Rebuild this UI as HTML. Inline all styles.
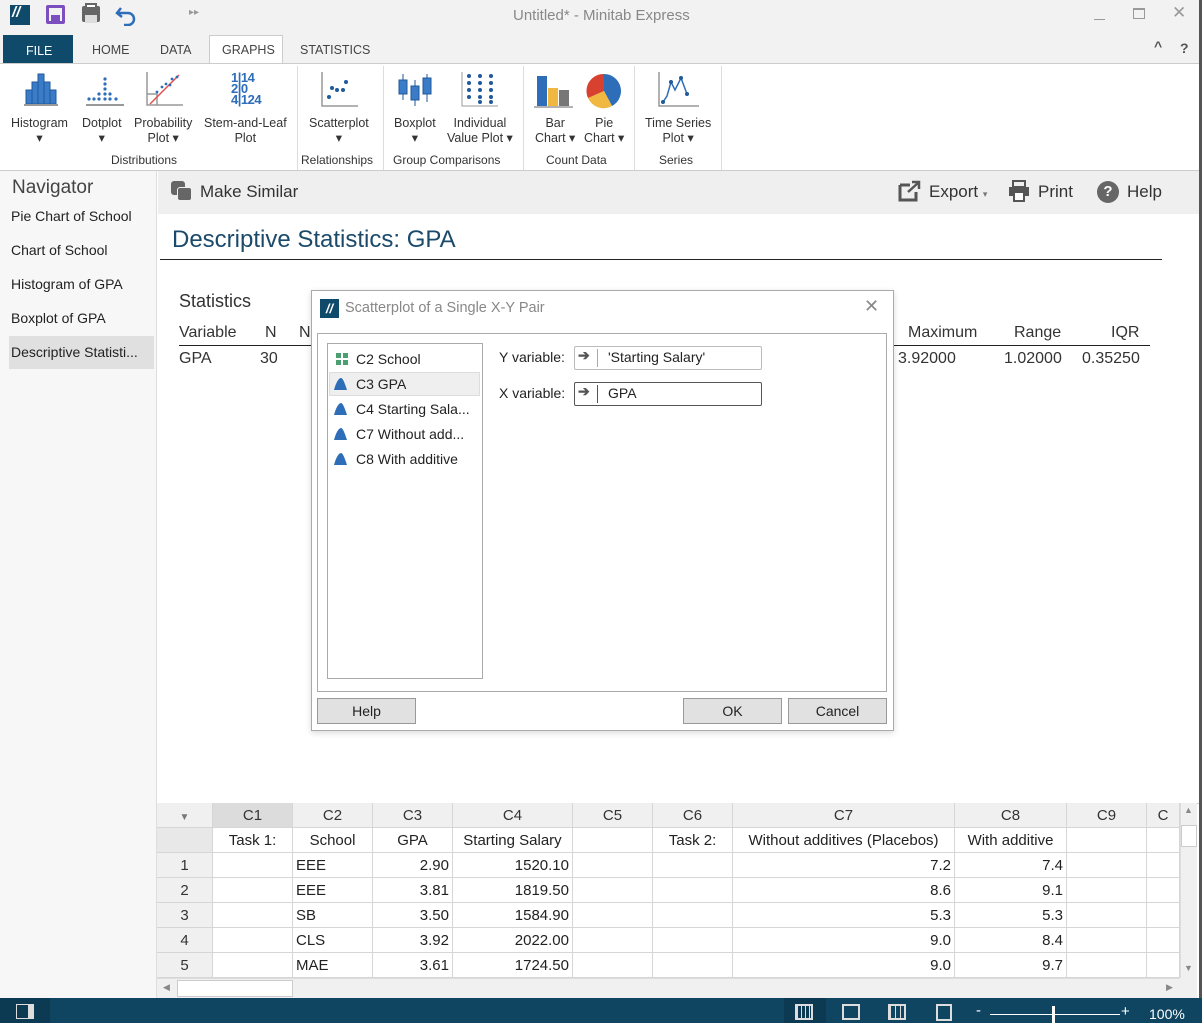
<!DOCTYPE html>
<html><head><meta charset="utf-8"><style>
*{box-sizing:border-box;margin:0;padding:0}
body{width:1202px;height:1023px;position:relative;overflow:hidden;background:#fff;font-family:"Liberation Sans",sans-serif;color:#222}
.a{position:absolute}
.t{position:absolute;white-space:nowrap}
.lbl{font-size:12.5px;color:#333;text-align:center;line-height:15px}
.grp{font-size:12px;color:#333}
.sep{position:absolute;top:66px;width:1px;height:104px;background:#ddd}
.nav{font-size:14px;color:#222;left:11px}
.cell{position:absolute;height:25px;line-height:25px;font-size:15px;border-right:1px solid #d6d6d6;border-bottom:1px solid #d6d6d6;padding:0 3px;white-space:nowrap;overflow:hidden}
.hd{background:#f0f0f0;text-align:center;color:#333}
.btn{position:absolute;top:698px;height:26px;border:1px solid #999;background:#e1e1e1;font-size:14px;text-align:center;line-height:24px}
.li{position:absolute;left:329px;width:150px;height:24px;font-size:14px;line-height:24px;padding-left:27px}
.tri{position:absolute;left:5px;top:6px;width:13px;height:12px;background:#2e6db8;clip-path:path('M0 12 C2 4 5 0 7 0 C9 0 11 6 13 12 Z')}
</style></head><body>
<!-- title bar -->
<div class="a" style="left:0;top:0;width:1202px;height:63px;background:#f2f2f2"></div>
<div class="a" style="left:10px;top:5px;width:20px;height:20px;background:#0f4a6a"></div>
<div class="t" style="left:12px;top:4px;color:#fff;font-weight:bold;font-size:15px;font-style:italic">//</div>
<div class="a" style="left:46px;top:5px;width:19px;height:19px;border:3px solid #7b4fc0;border-radius:2px"></div>
<div class="a" style="left:51px;top:15px;width:9px;height:6px;background:#7b4fc0"></div>
<div class="a" style="left:82px;top:6px;width:18px;height:16px;background:#666;border-radius:2px"></div>
<div class="a" style="left:85px;top:3px;width:12px;height:6px;border:2px solid #666;background:#fff"></div>
<div class="a" style="left:85px;top:15px;width:12px;height:8px;background:#ddd"></div>
<svg class="a" style="left:114px;top:4px" width="24" height="22"><path d="M7 4 L3 9 L8 13 M3 9 H14 A6 6 0 0 1 14 21 H10" fill="none" stroke="#2e6db8" stroke-width="2.5"/></svg>
<div class="t" style="left:189px;top:7px;font-size:10px;color:#999">▸▸</div>
<div class="t" style="left:513px;top:7px;font-size:15px;color:#888">Untitled* - Minitab Express</div>
<div class="a" style="left:1094px;top:19px;width:11px;height:1px;background:#999"></div>
<div class="a" style="left:1133px;top:8px;width:12px;height:11px;border:1px solid #999;border-top-width:2px"></div>
<div class="t" style="left:1172px;top:3px;font-size:17px;color:#999">✕</div>
<!-- tabs -->
<div class="a" style="left:3px;top:35px;width:70px;height:28px;background:#0f4a6a"></div>
<div class="t" style="left:26px;top:44px;font-size:12.5px;color:#fff">FILE</div>
<div class="t" style="left:92px;top:43px;font-size:12.5px;color:#444">HOME</div>
<div class="t" style="left:160px;top:43px;font-size:12.5px;color:#444">DATA</div>
<div class="a" style="left:209px;top:35px;width:74px;height:30px;background:#fff;border:1px solid #ccc;border-bottom:none"></div>
<div class="t" style="left:222px;top:43px;font-size:12.5px;color:#444">GRAPHS</div>
<div class="t" style="left:300px;top:43px;font-size:12.5px;color:#444">STATISTICS</div>
<div class="t" style="left:1154px;top:38px;font-size:14px;color:#555;font-weight:bold">^</div>
<div class="t" style="left:1180px;top:40px;font-size:14px;color:#555;font-weight:bold">?</div>
<div class="a" style="left:0;top:63px;width:1202px;height:1px;background:#ccc"></div>
<!-- ribbon -->
<div class="a" style="left:0;top:64px;width:1202px;height:107px;background:#fff;border-bottom:1px solid #ccc"></div>
<svg class="a" style="left:22px;top:72px" width="40" height="36"><g fill="#3a7cc8" stroke="#1f5a9a"><rect x="4" y="18" width="6" height="14"/><rect x="10" y="10" width="6" height="22"/><rect x="16" y="2" width="6" height="30"/><rect x="22" y="10" width="6" height="22"/><rect x="28" y="18" width="6" height="14"/></g><line x1="2" y1="33" x2="36" y2="33" stroke="#999" stroke-width="2"/></svg>
<svg class="a" style="left:84px;top:72px" width="42" height="36"><g fill="#2e6db8"><circle cx="5" cy="27" r="1.6"/><circle cx="10" cy="27" r="1.6"/><circle cx="15" cy="27" r="1.6"/><circle cx="15" cy="22" r="1.6"/><circle cx="21" cy="27" r="1.6"/><circle cx="21" cy="22" r="1.6"/><circle cx="21" cy="17" r="1.6"/><circle cx="21" cy="12" r="1.6"/><circle cx="21" cy="7" r="1.6"/><circle cx="26" cy="27" r="1.6"/><circle cx="26" cy="22" r="1.6"/><circle cx="32" cy="27" r="1.6"/></g><line x1="2" y1="33" x2="40" y2="33" stroke="#999" stroke-width="2"/></svg>
<svg class="a" style="left:145px;top:72px" width="40" height="36"><path d="M2 0 V33 H38 M2 22 H12 V33" fill="none" stroke="#999" stroke-width="1.5"/><line x1="5" y1="32" x2="34" y2="3" stroke="#e05050" stroke-width="1.5"/><g fill="#2e6db8"><circle cx="12" cy="20" r="1.4"/><circle cx="17" cy="15" r="1.4"/><circle cx="21" cy="12" r="1.4"/><circle cx="25" cy="13" r="1.4"/><circle cx="27" cy="7" r="1.4"/><circle cx="32" cy="5" r="1.4"/></g></svg>
<div class="t" style="left:231px;top:72px;font-size:13px;line-height:11px;color:#2e6db8;font-weight:bold;letter-spacing:-0.5px">1|14<br>2|0<br>4|124</div>
<svg class="a" style="left:320px;top:72px" width="40" height="38"><path d="M2 0 V34 H38" fill="none" stroke="#999" stroke-width="1.5"/><g fill="#1f5a9a"><circle cx="9" cy="25" r="2"/><circle cx="12" cy="16" r="2"/><circle cx="17" cy="18" r="2"/><circle cx="23" cy="18" r="2"/><circle cx="26" cy="10" r="2"/></g></svg>
<svg class="a" style="left:396px;top:72px" width="40" height="36"><g stroke="#1f5a9a" fill="#3a7cc8"><line x1="7" y1="2" x2="7" y2="28"/><rect x="3" y="8" width="8" height="14"/><line x1="19" y1="8" x2="19" y2="34"/><rect x="15" y="14" width="8" height="14"/><line x1="31" y1="2" x2="31" y2="30"/><rect x="27" y="6" width="8" height="16"/></g></svg>
<svg class="a" style="left:460px;top:72px" width="40" height="36"><path d="M2 0 V34 H38" fill="none" stroke="#999"/><g fill="#1f5a9a"><circle cx="9" cy="4" r="2"/><circle cx="9" cy="11" r="2"/><circle cx="9" cy="18" r="2"/><circle cx="9" cy="25" r="2"/><circle cx="20" cy="4" r="2"/><circle cx="20" cy="11" r="2"/><circle cx="20" cy="18" r="2"/><circle cx="20" cy="25" r="2"/><circle cx="20" cy="30" r="2"/><circle cx="31" cy="4" r="2"/><circle cx="31" cy="11" r="2"/><circle cx="31" cy="18" r="2"/><circle cx="31" cy="25" r="2"/><circle cx="31" cy="30" r="2"/></g></svg>
<svg class="a" style="left:533px;top:72px" width="42" height="38"><rect x="4" y="4" width="10" height="30" fill="#2e6db8"/><rect x="15" y="16" width="10" height="18" fill="#f0b840"/><rect x="26" y="18" width="10" height="16" fill="#777"/><line x1="1" y1="35" x2="40" y2="35" stroke="#999" stroke-width="1.5"/></svg>
<svg class="a" style="left:584px;top:72px" width="40" height="38"><path d="M20 19 L20 2 A17 17 0 0 1 28 34 Z" fill="#2e6db8"/><path d="M20 19 L28 34 A17 17 0 0 1 4 26 Z" fill="#f0b840"/><path d="M20 19 L4 26 A17 17 0 0 1 20 2 Z" fill="#d84030"/></svg>
<svg class="a" style="left:657px;top:70px" width="44" height="40"><path d="M2 2 V36 H42" fill="none" stroke="#999" stroke-width="1.5"/><polyline points="6,32 10,26 14,12 18,20 24,8 30,24" fill="none" stroke="#2e6db8" stroke-width="1.5"/><g fill="#1f5a9a"><circle cx="6" cy="32" r="2"/><circle cx="14" cy="12" r="2"/><circle cx="24" cy="8" r="2"/><circle cx="30" cy="24" r="2"/></g></svg>
<div class="t lbl" style="left:11px;top:116px">Histogram<br>▾</div>
<div class="t lbl" style="left:82px;top:116px">Dotplot<br>▾</div>
<div class="t lbl" style="left:134px;top:116px">Probability<br>Plot ▾</div>
<div class="t lbl" style="left:204px;top:116px">Stem-and-Leaf<br>Plot</div>
<div class="t lbl" style="left:309px;top:116px">Scatterplot<br>▾</div>
<div class="t lbl" style="left:394px;top:116px">Boxplot<br>▾</div>
<div class="t lbl" style="left:447px;top:116px">Individual<br>Value Plot ▾</div>
<div class="t lbl" style="left:535px;top:116px">Bar<br>Chart ▾</div>
<div class="t lbl" style="left:584px;top:116px">Pie<br>Chart ▾</div>
<div class="t lbl" style="left:645px;top:116px">Time Series<br>Plot ▾</div>
<div class="t grp" style="left:111px;top:153px">Distributions</div>
<div class="t grp" style="left:301px;top:153px">Relationships</div>
<div class="t grp" style="left:393px;top:153px">Group Comparisons</div>
<div class="t grp" style="left:546px;top:153px">Count Data</div>
<div class="t grp" style="left:659px;top:153px">Series</div>
<div class="sep" style="left:297px"></div><div class="sep" style="left:383px"></div><div class="sep" style="left:523px"></div><div class="sep" style="left:634px"></div><div class="sep" style="left:721px"></div>
<!-- navigator -->
<div class="a" style="left:0;top:171px;width:157px;height:827px;background:#f7f7f7;border-right:1px solid #ddd"></div>
<div class="t" style="left:12px;top:177px;font-size:19px;color:#444">Navigator</div>
<div class="t nav" style="top:208px">Pie Chart of School</div>
<div class="t nav" style="top:242px">Chart of School</div>
<div class="t nav" style="top:276px">Histogram of GPA</div>
<div class="t nav" style="top:310px">Boxplot of GPA</div>
<div class="a" style="left:9px;top:336px;width:145px;height:33px;background:#e0e0e0"></div>
<div class="t nav" style="top:344px">Descriptive Statisti...</div>
<!-- output -->
<div class="a" style="left:158px;top:171px;width:1042px;height:43px;background:#efefef"></div>
<div class="a" style="left:171px;top:181px;width:14px;height:14px;background:#666;border-radius:3px"></div>
<div class="a" style="left:177px;top:187px;width:15px;height:14px;background:#666;border-radius:3px;border:1px solid #efefef"></div>
<div class="t" style="left:200px;top:182px;font-size:17px;color:#333">Make Similar</div>
<svg class="a" style="left:898px;top:180px" width="24" height="22"><path d="M2 5 H12 M2 5 V20 H18 V12" fill="none" stroke="#555" stroke-width="3"/><path d="M10 12 L20 3 M14 2 H21 V9" fill="none" stroke="#555" stroke-width="2.5"/></svg>
<div class="t" style="left:929px;top:182px;font-size:17px;color:#333">Export <span style="font-size:9px;color:#777">▾</span></div>
<svg class="a" style="left:1008px;top:180px" width="22" height="22"><rect x="5" y="1" width="12" height="6" fill="none" stroke="#555" stroke-width="2"/><rect x="1" y="7" width="20" height="9" fill="#555"/><rect x="6" y="12" width="10" height="9" fill="#fff" stroke="#555" stroke-width="2"/></svg>
<div class="t" style="left:1038px;top:182px;font-size:17px;color:#333">Print</div>
<div class="a" style="left:1097px;top:181px;width:22px;height:22px;border-radius:50%;background:#666;color:#fff;font-weight:bold;font-size:15px;text-align:center;line-height:22px">?</div>
<div class="t" style="left:1127px;top:182px;font-size:17px;color:#333">Help</div>
<div class="t" style="left:172px;top:226px;font-size:24px;color:#1b4a6b">Descriptive Statistics: GPA</div>
<div class="a" style="left:160px;top:259px;width:1002px;height:1px;background:#222"></div>
<div class="t" style="left:179px;top:291px;font-size:18px;color:#333">Statistics</div>
<div class="t" style="left:179px;top:324px;font-size:16px;color:#333">Variable</div>
<div class="t" style="left:265px;top:324px;font-size:16px;color:#333">N</div>
<div class="t" style="left:299px;top:324px;font-size:16px;color:#333">N</div>
<div class="t" style="left:908px;top:324px;font-size:16px;color:#333">Maximum</div>
<div class="t" style="left:1014px;top:324px;font-size:16px;color:#333">Range</div>
<div class="t" style="left:1111px;top:324px;font-size:16px;color:#333">IQR</div>
<div class="a" style="left:179px;top:345px;width:971px;height:1px;background:#222"></div>
<div class="t" style="left:179px;top:350px;font-size:16px;color:#333">GPA</div>
<div class="t" style="left:260px;top:350px;font-size:16px;color:#333">30</div>
<div class="t" style="left:898px;top:350px;font-size:16px;color:#333">3.92000</div>
<div class="t" style="left:1004px;top:350px;font-size:16px;color:#333">1.02000</div>
<div class="t" style="left:1082px;top:350px;font-size:16px;color:#333">0.35250</div>
<!-- dialog -->
<div class="a" style="left:311px;top:290px;width:583px;height:441px;background:#fff;border:1px solid #aaa;box-shadow:0 2px 6px rgba(0,0,0,.15)"></div>
<div class="a" style="left:320px;top:299px;width:19px;height:19px;background:#0f4a6a;color:#fff;font-weight:bold;font-style:italic;font-size:13px;text-align:center;line-height:19px">//</div>
<div class="t" style="left:345px;top:300px;font-size:14.5px;color:#888">Scatterplot of a Single X-Y Pair</div>
<div class="t" style="left:864px;top:296px;font-size:18px;color:#888">✕</div>
<div class="a" style="left:317px;top:333px;width:570px;height:359px;border:1px solid #aaa"></div>
<div class="a" style="left:327px;top:343px;width:156px;height:336px;border:1px solid #aaa"></div>
<div class="a" style="left:329px;top:372px;width:151px;height:24px;background:#efefef;border:1px solid #ddd"></div>
<div class="li" style="top:347px"><div class="a" style="left:7px;top:6px;width:12px;height:12px;background:linear-gradient(#fff,#fff) 5px 0/2px 12px no-repeat,linear-gradient(#fff,#fff) 0 5px/12px 2px no-repeat,#4aa070"></div>C2 School</div>
<div class="li" style="top:372px"><div class="tri"></div>C3 GPA</div>
<div class="li" style="top:397px"><div class="tri"></div>C4 Starting Sala...</div>
<div class="li" style="top:422px"><div class="tri"></div>C7 Without add...</div>
<div class="li" style="top:447px"><div class="tri"></div>C8 With additive</div>
<div class="t" style="left:499px;top:349px;font-size:14px">Y variable:</div>
<div class="t" style="left:499px;top:385px;font-size:14px">X variable:</div>
<div class="a" style="left:574px;top:346px;width:188px;height:24px;border:1px solid #bbb;border-radius:2px"></div>
<div class="a" style="left:574px;top:382px;width:188px;height:24px;border:1px solid #555;border-radius:2px"></div>
<div class="a" style="left:597px;top:349px;width:1px;height:18px;background:#aaa"></div>
<div class="a" style="left:597px;top:385px;width:1px;height:18px;background:#555"></div>
<div class="t" style="left:578px;top:347px;font-size:14px;color:#555;font-weight:bold">➔</div>
<div class="t" style="left:578px;top:383px;font-size:14px;color:#555;font-weight:bold">➔</div>
<div class="t" style="left:608px;top:349px;font-size:14px">'Starting Salary'</div>
<div class="t" style="left:608px;top:385px;font-size:14px">GPA</div>
<div class="btn" style="left:317px;width:99px">Help</div>
<div class="btn" style="left:683px;width:99px">OK</div>
<div class="btn" style="left:788px;width:99px">Cancel</div>
<!-- worksheet -->
<div class="a" style="left:157px;top:803px;width:1043px;height:195px;background:#fff;border-top:1px solid #ccc"></div>
<div id="ws"></div>
<div class="a" style="left:1180px;top:803px;width:17px;height:175px;background:#f0f0f0;border-left:1px solid #ddd"></div>
<div class="t" style="left:1184px;top:805px;font-size:9px;color:#888">▲</div>
<div class="a" style="left:1181px;top:825px;width:16px;height:22px;background:#fff;border:1px solid #ccc"></div>
<div class="t" style="left:1184px;top:963px;font-size:9px;color:#888">▼</div>
<div class="a" style="left:157px;top:978px;width:1023px;height:20px;background:#f0f0f0;border-top:1px solid #ddd"></div>
<div class="t" style="left:163px;top:982px;font-size:9px;color:#888">◀</div>
<div class="a" style="left:177px;top:980px;width:116px;height:17px;background:#fff;border:1px solid #ccc"></div>
<div class="a" style="left:1180px;top:978px;width:17px;height:20px;background:#f0f0f0"></div>
<div class="t" style="left:1166px;top:982px;font-size:9px;color:#888">▶</div>
<!-- status bar -->
<div class="a" style="left:0;top:998px;width:1202px;height:25px;background:#0f4561"></div>
<div class="a" style="left:0;top:998px;width:50px;height:25px;background:#0c3a52"></div>
<div class="a" style="left:16px;top:1004px;width:18px;height:15px;border:1px solid #ddd;border-right-width:6px"></div>
<div class="a" style="left:784px;top:998px;width:42px;height:25px;background:#0c3a52"></div>
<div class="a" style="left:795px;top:1004px;width:18px;height:16px;border:2px solid #ddd;background:repeating-linear-gradient(90deg,#ddd 0 1px,transparent 1px 4px)"></div>
<div class="a" style="left:842px;top:1004px;width:18px;height:16px;border:2px solid #ddd"></div>
<div class="a" style="left:888px;top:1004px;width:18px;height:16px;border:2px solid #ddd;background:repeating-linear-gradient(90deg,#ddd 0 1px,transparent 1px 5px)"></div>
<div class="a" style="left:936px;top:1004px;width:16px;height:17px;border:2px solid #ddd"></div>
<div class="t" style="left:976px;top:1002px;font-size:15px;color:#fff">-</div>
<div class="a" style="left:990px;top:1014px;width:130px;height:1px;background:#fff"></div>
<div class="a" style="left:1052px;top:1006px;width:3px;height:17px;background:#fff"></div>
<div class="t" style="left:1121px;top:1003px;font-size:15px;color:#fff">+</div>
<div class="t" style="left:1149px;top:1006px;font-size:14px;color:#fff">100%</div>
<div class="a" style="left:1199px;top:0;width:3px;height:998px;background:#555"></div>
<script>
var cols=[[157,56],[213,80],[293,80],[373,80],[453,120],[573,80],[653,80],[733,222],[955,112],[1067,80],[1147,33]];
var hdr=['','C1','C2','C3','C4','C5','C6','C7','C8','C9','C'];
var names=['','Task 1:','School','GPA','Starting Salary','','Task 2:','Without additives (Placebos)','With additive','',''];
var rows=[['1','','EEE','2.90','1520.10','','','7.2','7.4','',''],['2','','EEE','3.81','1819.50','','','8.6','9.1','',''],['3','','SB','3.50','1584.90','','','5.3','5.3','',''],['4','','CLS','3.92','2022.00','','','9.0','8.4','',''],['5','','MAE','3.61','1724.50','','','9.0','9.7','','']];
var h='';
function cell(i,y,txt,cls,al,bg){h+='<div class="cell '+cls+'" style="left:'+cols[i][0]+'px;top:'+y+'px;width:'+cols[i][1]+'px;text-align:'+al+';'+(bg?'background:'+bg:'')+'">'+txt+'</div>';}
for(var i=0;i<11;i++){cell(i,803,i==0?'<span style="font-size:10px;color:#777">▼</span>':hdr[i],'hd','center',i==1?'#dcdcdc':'');}
for(var i=0;i<11;i++){cell(i,828,names[i],i==0?'hd':'','center',i==0?'#e8e8e8':'#fff');}
for(var r=0;r<5;r++)for(var i=0;i<11;i++){var al=i==0?'center':(i==2?'left':'right');cell(i,853+r*25,rows[r][i],i==0?'hd':'',al,i==0?'':'#fff');}
document.getElementById('ws').innerHTML=h;
</script>
</body></html>
